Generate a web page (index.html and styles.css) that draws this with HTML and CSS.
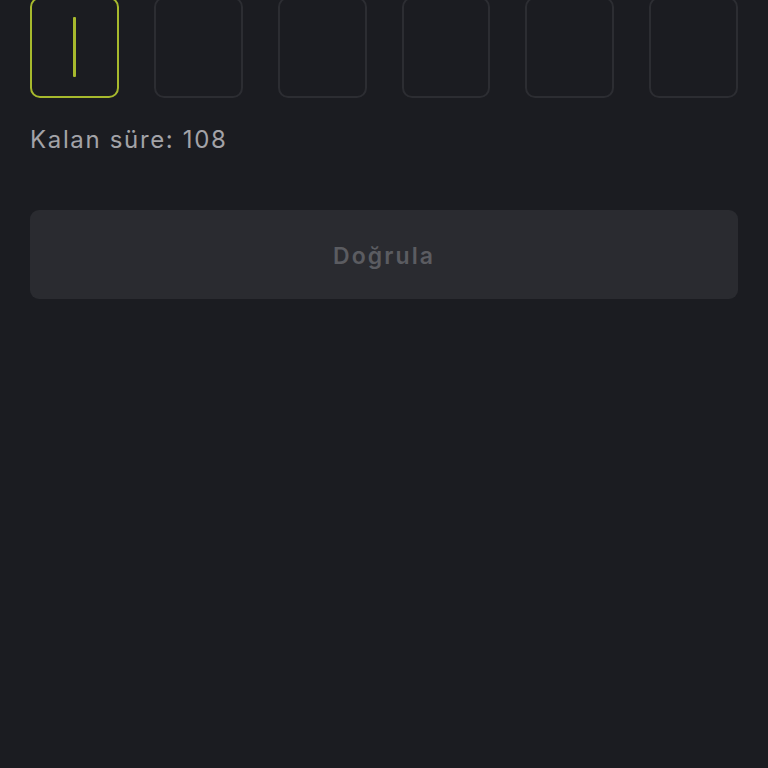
FILE: index.html
```html
<!DOCTYPE html>
<html lang="tr">
<head>
<meta charset="utf-8">
<link rel="stylesheet" href="styles.css">
</head>
<body>
<main class="page">
  <div class="code-row">
    <div class="cell active"><span class="caret"></span></div>
    <div class="cell"></div>
    <div class="cell"></div>
    <div class="cell"></div>
    <div class="cell"></div>
    <div class="cell"></div>
  </div>
  <p class="timer">Kalan süre: 108</p>
  <button class="verify" type="button">Doğrula</button>
</main>
</body>
</html>
```
FILE: styles.css
```css
html, body {
  margin: 0;
  padding: 0;
  background: #1b1c21;
  height: 100%;
}
body {
  font-family: "Inter", "Noto Sans", sans-serif;
}
.page {
  padding: 0 30px;
  margin-top: -3px;
}
.code-row {
  display: grid;
  grid-template-columns: repeat(6, 1fr);
  column-gap: 35px;
}
.cell {
  height: 101px;
  box-sizing: border-box;
  border: 2px solid #2c2d32;
  border-radius: 10px;
  display: flex;
  align-items: center;
  justify-content: center;
}
.cell.active {
  border-color: #a7b92d;
}
.caret {
  display: block;
  width: 3px;
  height: 60px;
  margin-top: -2px;
  background: #a7b92d;
  border-radius: 1px;
}
.timer {
  margin: 27px 0 0;
  font-size: 24px;
  line-height: 30px;
  color: #a3a3a8;
  letter-spacing: 1.65px;
}
.verify {
  display: block;
  width: 100%;
  height: 89px;
  margin-top: 55px;
  border: none;
  border-radius: 9px;
  background: #2a2b30;
  color: #5b5c61;
  font-family: "Inter", "Noto Sans", sans-serif;
  font-size: 23px;
  font-weight: 600;
  letter-spacing: 2.1px;
  padding: 3px 0 0;
}
```
